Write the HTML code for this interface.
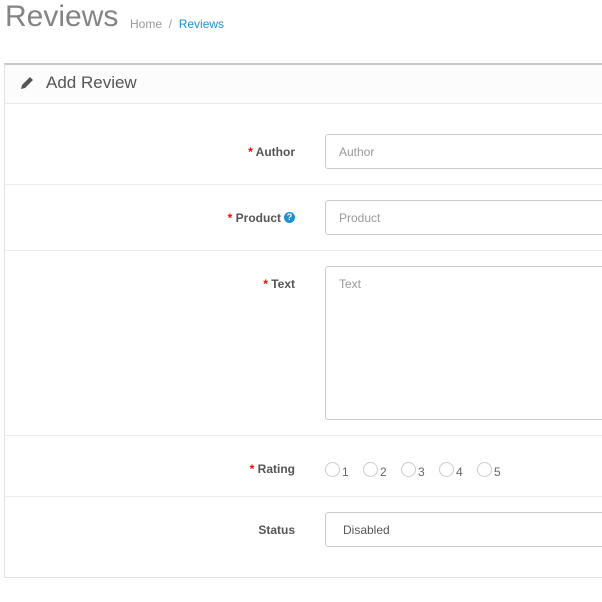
<!DOCTYPE html>
<html><head><style>
body{margin:0;width:602px;height:602px;overflow:hidden;background:#fff;font-family:"Liberation Sans",sans-serif;position:relative}
.a{position:absolute}
h1{position:absolute;left:5px;top:0px;margin:0;font-weight:normal;font-size:30px;color:#848484}
.bc{left:130px;top:17px;font-size:12px;color:#999}
.bc b{font-weight:normal;color:#1e91cf}
.panel{left:4px;top:63px;width:620px;height:512px;border:1px solid #e2e2e2;border-top:2px solid #c8c8c8}
.hd{left:5px;top:65px;width:620px;height:38px;background:#fcfcfc;border-bottom:1px solid #e8e8e8}
.ht{left:46px;top:73px;font-size:17px;color:#555}
.line{left:5px;width:620px;height:1px;background:#ececec}
.lb{right:307px;font-size:12px;font-weight:bold;color:#555;text-align:right}
.lb i{color:#f00;font-style:normal}
.in{left:325px;width:300px;border:1px solid #ccc;border-radius:3px;font-size:12px;color:#999;box-sizing:border-box;padding:10px 13px}
.r{top:462px;width:13px;height:13px;border:1px solid #ccc;border-radius:50%}
.rn{top:465px;font-size:12px;color:#666}
</style></head><body>
<h1>Reviews</h1>
<div class="a bc">Home &nbsp;/&nbsp; <b>Reviews</b></div>
<div class="a panel"></div>
<div class="a hd"></div>
<svg class="a" style="left:20px;top:76px" width="14" height="14" viewBox="0 0 14 14"><path d="M1 13l1-4 7-7 3 3-7 7z M10 1l3 3 -1 1 -3-3z" fill="#555"/></svg>
<div class="a ht">Add Review</div>
<div class="a lb" style="top:145px"><i>*</i> Author</div>
<div class="a in" style="top:134px;height:35px">Author</div>
<div class="a line" style="top:184px"></div>
<div class="a lb" style="top:211px;right:321px"><i>*</i> Product</div>
<div class="a" style="left:284px;top:212px;width:11px;height:11px;border-radius:50%;background:#1e91cf;color:#fff;font-size:9px;font-weight:bold;text-align:center;line-height:11px">?</div>
<div class="a in" style="top:200px;height:35px">Product</div>
<div class="a line" style="top:250px"></div>
<div class="a lb" style="top:277px"><i>*</i> Text</div>
<div class="a in" style="top:266px;height:154px">Text</div>
<div class="a line" style="top:435px"></div>
<div class="a lb" style="top:462px"><i>*</i> Rating</div>
<div class="a r" style="left:325px"></div><div class="a rn" style="left:342px">1</div>
<div class="a r" style="left:363px"></div><div class="a rn" style="left:380px">2</div>
<div class="a r" style="left:401px"></div><div class="a rn" style="left:418px">3</div>
<div class="a r" style="left:439px"></div><div class="a rn" style="left:456px">4</div>
<div class="a r" style="left:477px"></div><div class="a rn" style="left:494px">5</div>
<div class="a line" style="top:496px"></div>
<div class="a lb" style="top:523px">Status</div>
<div class="a in" style="top:512px;height:35px;color:#555;padding-left:17px">Disabled</div>
</body></html>
